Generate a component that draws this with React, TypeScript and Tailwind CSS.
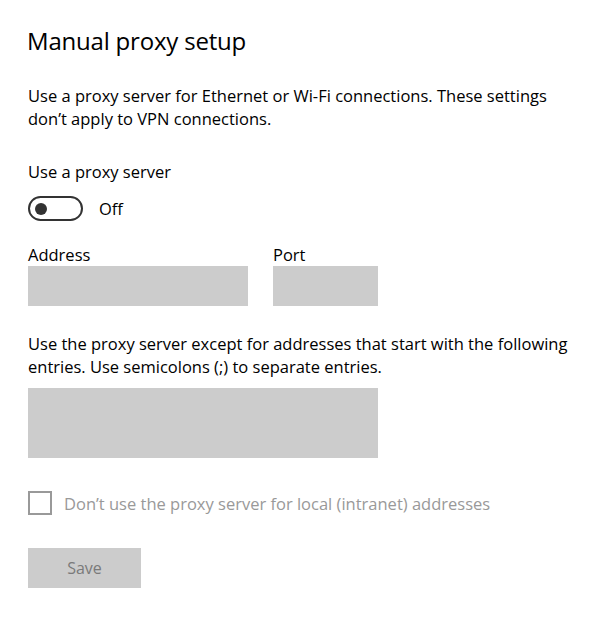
export default function App() {
  return (
    <div
      className="w-[600px] h-[617px] bg-white px-[28px] pt-[25px] text-black"
      style={{ fontFamily: '"Open Sans", "Noto Sans", sans-serif' }}
    >
      <h1 className="text-[24px] leading-[32px] -ml-[1px] tracking-[-0.2px]">Manual proxy setup</h1>

      <p className="mt-[27px] text-[16.5px] leading-[23px] w-[560px]">
        Use a proxy server for Ethernet or Wi-Fi connections. These settings don’t apply to VPN connections.
      </p>

      <div className="mt-[30px] text-[16.5px] leading-[23px]">Use a proxy server</div>

      <div className="mt-[13px] flex items-center gap-[16px]">
        <div className="w-[55px] h-[25px] rounded-full border-2 border-[#333] flex items-center px-[5px]">
          <div className="w-[12px] h-[12px] rounded-full bg-[#333]" />
        </div>
        <span className="text-[16.5px] leading-[23px]">Off</span>
      </div>

      <div className="mt-[22px] flex gap-[25px]">
        <div className="flex flex-col">
          <label className="text-[16.5px] leading-[23px]">Address</label>
          <div className="w-[220px] h-[40px] bg-[#cccccc]" />
        </div>
        <div className="flex flex-col">
          <label className="text-[16.5px] leading-[23px]">Port</label>
          <div className="w-[105px] h-[40px] bg-[#cccccc]" />
        </div>
      </div>

      <p className="mt-[26px] text-[16.5px] leading-[23px] w-[560px]">
        Use the proxy server except for addresses that start with the following entries. Use semicolons (;) to separate entries.
      </p>
      <div className="mt-[10px] w-[350px] h-[70px] bg-[#cccccc]" />

      <label className="mt-[33px] flex items-center gap-[12px]">
        <span className="w-[24px] h-[24px] border-2 border-[#999] bg-white" />
        <span className="text-[16.5px] leading-[23px] text-[#999]">
          Don’t use the proxy server for local (intranet) addresses
        </span>
      </label>

      <button className="mt-[33px] w-[113px] h-[40px] bg-[#cccccc] text-[16px] text-[#7a7a7a]">
        Save
      </button>
    </div>
  );
}
